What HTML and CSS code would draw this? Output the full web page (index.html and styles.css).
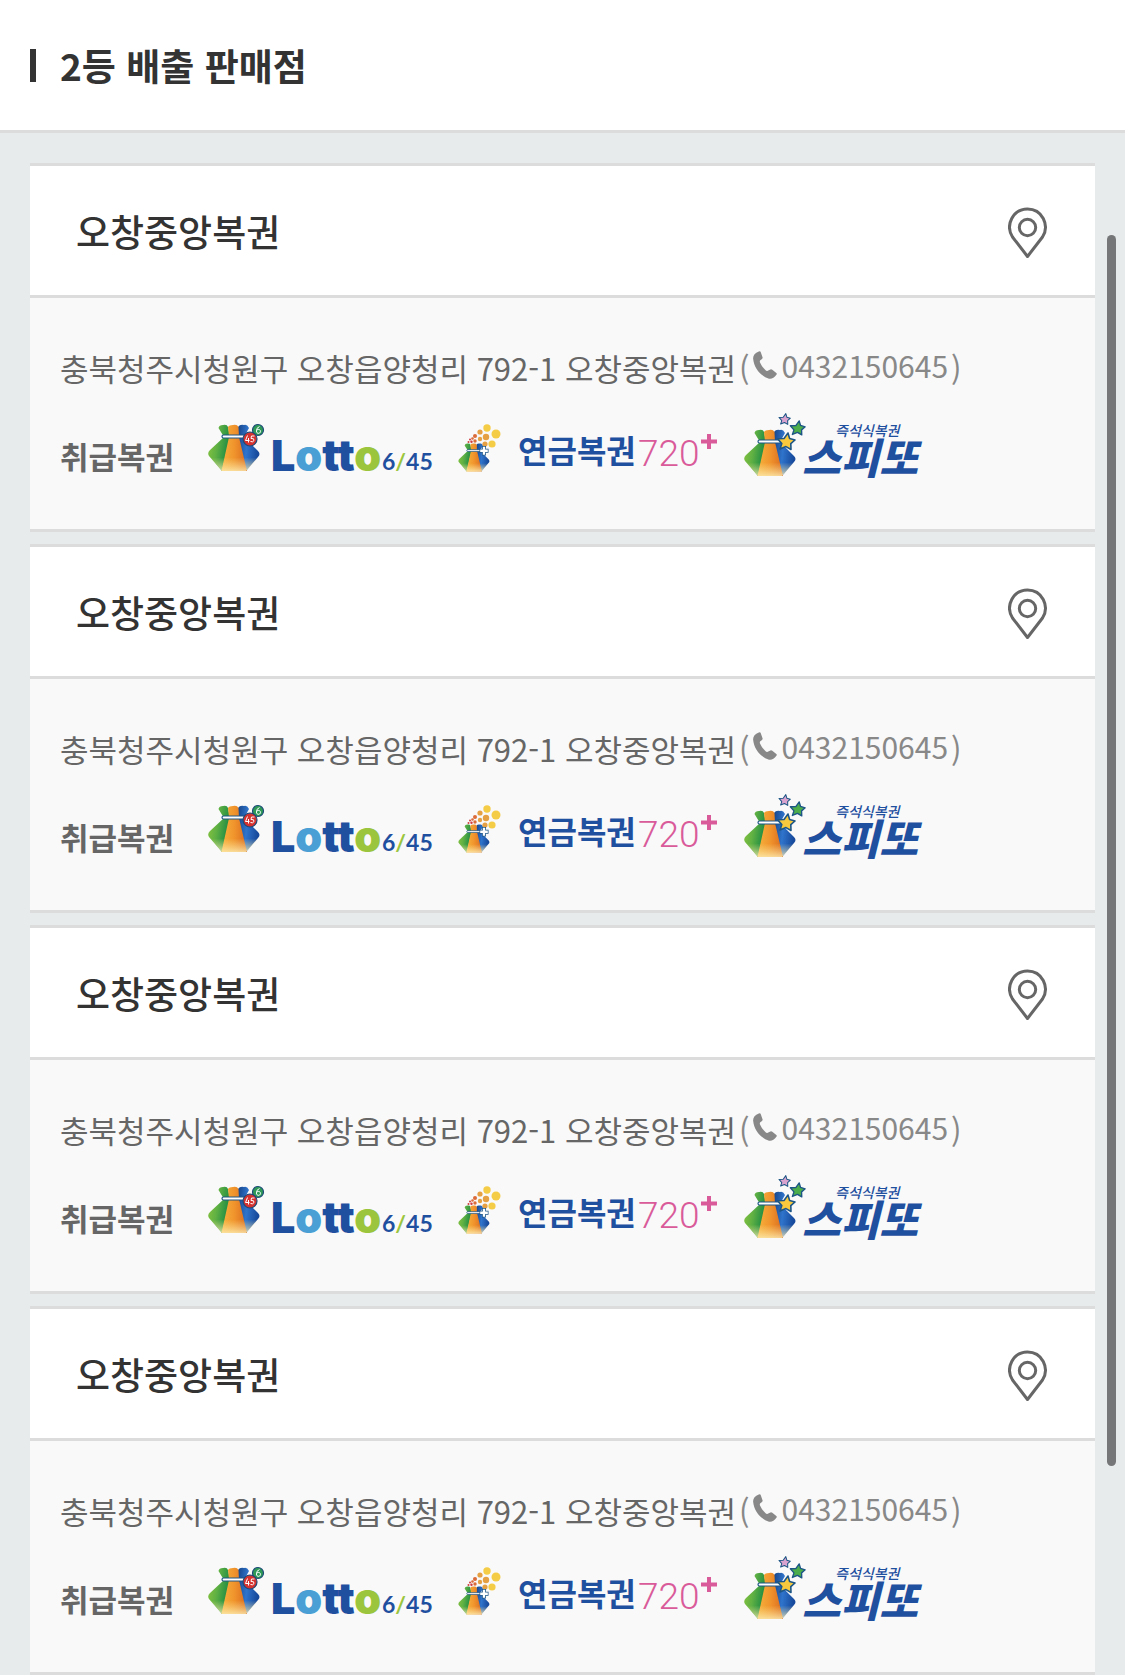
FILE: index.html
```html
<!DOCTYPE html>
<html lang="ko">
<head>
<meta charset="utf-8">
<meta name="viewport" content="width=device-width, initial-scale=1">
<title>2등 배출 판매점</title>
<link rel="stylesheet" href="styles.css">
</head>
<body>
<svg class="sprite" aria-hidden="true">
  <defs>
    <linearGradient id="green" x1="0" y1="0" x2="1" y2="0.3"><stop offset="0" stop-color="#8cc63f"/><stop offset="0.5" stop-color="#5fb043"/><stop offset="1" stop-color="#1c8a43"/></linearGradient>
    <linearGradient id="orange" x1="0" y1="0" x2="1" y2="0"><stop offset="0" stop-color="#f6b23c"/><stop offset="0.5" stop-color="#f0942c"/><stop offset="1" stop-color="#d96b20"/></linearGradient>
    <linearGradient id="blue" x1="0" y1="0" x2="1" y2="0.2"><stop offset="0" stop-color="#143f80"/><stop offset="0.5" stop-color="#2f74cc"/><stop offset="1" stop-color="#174a9c"/></linearGradient>
    <linearGradient id="glow" x1="0" y1="0" x2="0" y2="1"><stop offset="0.7" stop-color="#fde79a" stop-opacity="0"/><stop offset="1" stop-color="#fdeeb4" stop-opacity="0.8"/></linearGradient>
    <symbol id="bag" viewBox="0 0 52 48">
      <path fill="url(#green)" d="M10.500 4Q11 1 15 1Q19 0 20 3L22 13L14 47L1 32Q-1 29 2 26L16 13Z"/>
      <path fill="url(#blue)" d="M30 3Q32 0 36 1Q39 0 41 4L36 13L50 27Q53 30 50 33L38 47L29 13Z"/>
      <path fill="url(#orange)" d="M20 3Q21 1 25 1Q29 0 30.500 3L31 13L39 47H13.500L21 13Z"/>
      <path fill="url(#glow)" d="M2 33L14 47H38L50 34L31 2H19Z"/>
      <rect x="14" y="11" width="23" height="3" rx="1.500" fill="#fff" stroke="#1d5686" stroke-width="1.200"/>
    </symbol>
    <symbol id="star" viewBox="-10 -10 20 20">
      <path stroke="#1d5686" stroke-width="1.600" stroke-linejoin="round" d="M2-9L3.600-3.600L9-2L4.800 1.600L5 7.500L0 4.600L-6 7L-4.200 1.600L-8.400-3.200L-2-3.500Z"/>
    </symbol>
    <symbol id="lotto-mark" viewBox="0 0 62 70">
      <use href="#bag" x="0" y="12" width="52" height="48"/>
      <circle cx="50" cy="18" r="5.500" fill="#2f9a58" stroke="#1d4a78" stroke-width="1.200"/>
      <path d="M51.500 14.500Q48 16 48.500 19A2 2 0 1 0 49 18" fill="none" stroke="#fff"/>
      <circle cx="42" cy="27" r="7" fill="#d3322f" stroke="#1d4a78" stroke-width="1.200"/>
      <path d="M39.500 23.500L37.500 28.500H41.500M40.500 26V30.500M46.500 24H43.500L43 26.500Q46.500 26 46 28.500Q45 30.500 42.500 29.500" fill="none" stroke="#fff"/>
    </symbol>
    <symbol id="pension-mark" viewBox="0 0 50 70">
      <use href="#bag" x="2" y="31" width="32" height="29"/>
      <g fill="#f5cc46"><circle cx="31" cy="16" r="3.700"/><circle cx="40" cy="22" r="4.500"/><circle cx="36" cy="32" r="3.600"/></g>
      <g fill="#e6a044"><circle cx="24" cy="20" r="2.600"/><circle cx="30" cy="25" r="3.200"/><circle cx="24" cy="27" r="2.200"/><circle cx="29" cy="32" r="2.600"/></g>
      <g fill="#dc6b3a"><circle cx="19" cy="24" r="2"/><circle cx="19" cy="29" r="1.700"/><circle cx="16.500" cy="26.500" r="1.300"/></g>
      <g fill="#d13c3c"><circle cx="14" cy="27.500" r="1"/><circle cx="15.500" cy="29.800" r="1.200"/><circle cx="12.500" cy="30" r="1"/></g>
      <path d="M28 34V43.500M23.500 38.700H32.500" stroke="#1d5686" stroke-width="4"/>
      <path d="M28 34.700V42.800M24.200 38.700H31.800" stroke="#fff" stroke-width="2.400"/>
    </symbol>
    <symbol id="speetto-mark" viewBox="0 0 62 70">
      <use href="#bag" x="0" y="17" width="52" height="48"/>
      <use href="#star" x="34" y="1" width="13" height="13" fill="#d9a3cf"/>
      <use href="#star" x="45" y="8" width="17" height="17" fill="#4cae4a"/>
      <use href="#star" x="32" y="20" width="20" height="20" fill="#f8c93c"/>
    </symbol>
    <symbol id="pin" viewBox="0 0 40 52">
      <path d="M19.500 50.500L4.500 31C-3 19 5 3 19.500 3S42 19 34.500 31Z" fill="none" stroke="#666" stroke-width="3" stroke-linejoin="round"/>
      <circle cx="19.500" cy="21.500" r="8.200" fill="none" stroke="#666" stroke-width="3"/>
    </symbol>
    <symbol id="phone" viewBox="0 0 24 28">
      <path fill="#888" d="M5.800.4Q7.300-.3 7.700 1L9.600 6.400Q9.900 7.600 8.700 8.300L7.300 9.300Q6.500 10 7 11.500Q9 16 12.600 19.300Q13.700 20.200 14.700 19.700L17.400 18.400Q18.400 18 19.300 18.700L23.300 21.900Q24.300 22.800 23.400 23.700Q20 28.500 16 27.700C7 24.500 1 17 .1 7.500Q0 2.500 5.800.4Z"/>
    </symbol>
  </defs>
</svg>

<header class="page-head">
  <h1 class="page-title">2등 배출 판매점</h1>
</header>

<main class="stores">
  <article class="store">
    <div class="store-head">
      <h2 class="store-name">오창중앙복권</h2>
      <button class="pin" type="button" aria-label="지도 보기"><svg width="40" height="52"><use href="#pin"/></svg></button>
    </div>
    <div class="store-body">
      <p class="address">충북청주시청원구 오창읍양청리 792-1 오창중앙복권 <span class="contact">(<a class="tel" href="tel:0432150645"><svg width="24" height="28"><use href="#phone"/></svg>0432150645</a>)</span></p>
      <div class="games">
        <h3 class="games-label">취급복권</h3>
        <ul class="logos">
          <li><svg class="logo" width="224" height="70"><use href="#lotto-mark" width="62" height="70"/><text class="lotto" x="63" y="59">L<tspan class="sky">o</tspan>tt<tspan class="lime">o</tspan></text><text class="lotto-num" x="174" y="58">6<tspan class="lime">/</tspan>45</text></svg></li>
          <li><svg class="logo" width="264" height="70"><use href="#pension-mark" width="50" height="70"/><text class="pension" x="62" y="51">연금복권</text><text class="pension-num" x="182" y="54">720</text><path class="plus" d="M253 22V37M245 29.500H261"/></svg></li>
          <li><svg class="logo" width="200" height="70"><use href="#speetto-mark" width="62" height="70"/><text class="instant" x="91" y="24">즉석식복권</text><text class="speetto" x="58" y="62">스피또</text></svg></li>
        </ul>
      </div>
    </div>
  </article>

  <article class="store">
    <div class="store-head">
      <h2 class="store-name">오창중앙복권</h2>
      <button class="pin" type="button" aria-label="지도 보기"><svg width="40" height="52"><use href="#pin"/></svg></button>
    </div>
    <div class="store-body">
      <p class="address">충북청주시청원구 오창읍양청리 792-1 오창중앙복권 <span class="contact">(<a class="tel" href="tel:0432150645"><svg width="24" height="28"><use href="#phone"/></svg>0432150645</a>)</span></p>
      <div class="games">
        <h3 class="games-label">취급복권</h3>
        <ul class="logos">
          <li><svg class="logo" width="224" height="70"><use href="#lotto-mark" width="62" height="70"/><text class="lotto" x="63" y="59">L<tspan class="sky">o</tspan>tt<tspan class="lime">o</tspan></text><text class="lotto-num" x="174" y="58">6<tspan class="lime">/</tspan>45</text></svg></li>
          <li><svg class="logo" width="264" height="70"><use href="#pension-mark" width="50" height="70"/><text class="pension" x="62" y="51">연금복권</text><text class="pension-num" x="182" y="54">720</text><path class="plus" d="M253 22V37M245 29.500H261"/></svg></li>
          <li><svg class="logo" width="200" height="70"><use href="#speetto-mark" width="62" height="70"/><text class="instant" x="91" y="24">즉석식복권</text><text class="speetto" x="58" y="62">스피또</text></svg></li>
        </ul>
      </div>
    </div>
  </article>

  <article class="store">
    <div class="store-head">
      <h2 class="store-name">오창중앙복권</h2>
      <button class="pin" type="button" aria-label="지도 보기"><svg width="40" height="52"><use href="#pin"/></svg></button>
    </div>
    <div class="store-body">
      <p class="address">충북청주시청원구 오창읍양청리 792-1 오창중앙복권 <span class="contact">(<a class="tel" href="tel:0432150645"><svg width="24" height="28"><use href="#phone"/></svg>0432150645</a>)</span></p>
      <div class="games">
        <h3 class="games-label">취급복권</h3>
        <ul class="logos">
          <li><svg class="logo" width="224" height="70"><use href="#lotto-mark" width="62" height="70"/><text class="lotto" x="63" y="59">L<tspan class="sky">o</tspan>tt<tspan class="lime">o</tspan></text><text class="lotto-num" x="174" y="58">6<tspan class="lime">/</tspan>45</text></svg></li>
          <li><svg class="logo" width="264" height="70"><use href="#pension-mark" width="50" height="70"/><text class="pension" x="62" y="51">연금복권</text><text class="pension-num" x="182" y="54">720</text><path class="plus" d="M253 22V37M245 29.500H261"/></svg></li>
          <li><svg class="logo" width="200" height="70"><use href="#speetto-mark" width="62" height="70"/><text class="instant" x="91" y="24">즉석식복권</text><text class="speetto" x="58" y="62">스피또</text></svg></li>
        </ul>
      </div>
    </div>
  </article>

  <article class="store">
    <div class="store-head">
      <h2 class="store-name">오창중앙복권</h2>
      <button class="pin" type="button" aria-label="지도 보기"><svg width="40" height="52"><use href="#pin"/></svg></button>
    </div>
    <div class="store-body">
      <p class="address">충북청주시청원구 오창읍양청리 792-1 오창중앙복권 <span class="contact">(<a class="tel" href="tel:0432150645"><svg width="24" height="28"><use href="#phone"/></svg>0432150645</a>)</span></p>
      <div class="games">
        <h3 class="games-label">취급복권</h3>
        <ul class="logos">
          <li><svg class="logo" width="224" height="70"><use href="#lotto-mark" width="62" height="70"/><text class="lotto" x="63" y="59">L<tspan class="sky">o</tspan>tt<tspan class="lime">o</tspan></text><text class="lotto-num" x="174" y="58">6<tspan class="lime">/</tspan>45</text></svg></li>
          <li><svg class="logo" width="264" height="70"><use href="#pension-mark" width="50" height="70"/><text class="pension" x="62" y="51">연금복권</text><text class="pension-num" x="182" y="54">720</text><path class="plus" d="M253 22V37M245 29.500H261"/></svg></li>
          <li><svg class="logo" width="200" height="70"><use href="#speetto-mark" width="62" height="70"/><text class="instant" x="91" y="24">즉석식복권</text><text class="speetto" x="58" y="62">스피또</text></svg></li>
        </ul>
      </div>
    </div>
  </article>
</main>
<div class="scroll-thumb" aria-hidden="true"></div>
</body>
</html>
```

FILE: styles.css
```css
* {
  box-sizing: border-box;
  margin: 0;
  padding: 0;
}

body {
  background: #e7ebec;
  color: #333;
  font-family: "Noto Sans CJK KR", "Noto Sans", sans-serif;
}

.sprite {
  position: absolute;
  width: 0;
  height: 0;
}

.page-head {
  padding: 38px 30px;
  background: #fff;
  border-bottom: 3px solid #dcdcdc;
}

.page-title {
  display: flex;
  align-items: center;
  gap: 24px;
  font-size: 37px;
  font-weight: 700;
  line-height: 54px;
}

.page-title::before {
  content: "";
  width: 6px;
  height: 33px;
  background: #333;
}

.stores {
  display: flex;
  flex-direction: column;
  gap: 12px;
  padding: 30px 30px 0;
}

.store {
  border-top: 3px solid #dcdcdc;
  border-bottom: 3px solid #dcdcdc;
  background: #f9f9f9;
}

.store-head {
  display: flex;
  align-items: center;
  justify-content: space-between;
  padding: 39px 47px 37px 46px;
  background: #fff;
  border-bottom: 3px solid #dcdcdc;
}

.store-name {
  font-size: 37px;
  font-weight: 500;
  line-height: 53px;
}

.pin {
  display: block;
  border: 0;
  background: none;
  cursor: pointer;
}

.pin svg,
.logo {
  display: block;
}

.store-body {
  display: flex;
  flex-direction: column;
  gap: 20px;
  padding: 46px 30px 47px;
}

.address {
  display: flex;
  flex-wrap: wrap;
  gap: 3px;
  color: #666;
  font-size: 31px;
  line-height: 48px;
}

.contact {
  display: flex;
  gap: 3px;
  color: #888;
}

.tel {
  display: flex;
  align-items: center;
  gap: 5px;
  height: 42px;
  color: #888;
  font-size: 30px;
  line-height: 42px;
  text-decoration: none;
}

.games {
  display: flex;
  align-items: flex-end;
  gap: 34px;
}

.games-label {
  color: #666;
  font-size: 31px;
  font-weight: 700;
  line-height: 52px;
  white-space: nowrap;
}

.logos {
  display: flex;
  flex-wrap: wrap;
  gap: 24px;
  list-style: none;
}

.logo {
  overflow: visible;
}

.logo text {
  fill: #1f4f9f;
}

.logo .lotto {
  font: 900 43px Inter, sans-serif;
}

.logo .lotto-num {
  font: 700 23px Lato, sans-serif;
}

.logo .sky {
  fill: #4a9fd4;
}

.logo .lime {
  fill: #9bc53d;
}

.logo .pension {
  font-size: 32px;
  font-weight: 700;
}

.logo .pension-num {
  fill: #d95b9a;
  font: 300 37px Roboto, sans-serif;
}

.plus {
  stroke: #d95b9a;
  stroke-width: 4px;
}

.logo .instant {
  font-size: 14px;
  font-style: italic;
  font-weight: 500;
}

.logo .speetto {
  font-size: 42px;
  font-style: italic;
  font-weight: 900;
}

.scroll-thumb {
  position: fixed;
  top: 14%;
  right: 9px;
  width: 9px;
  height: 73.5%;
  border-radius: 5px;
  background: #757678;
}
```
